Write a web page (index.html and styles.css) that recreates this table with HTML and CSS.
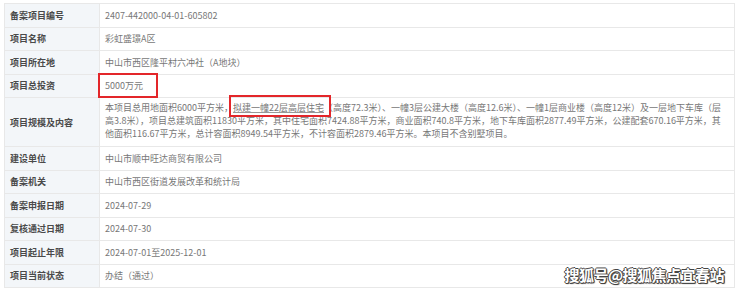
FILE: index.html
```html
<!DOCTYPE html>
<html lang="zh-CN">
<head>
<meta charset="utf-8">
<title>备案项目信息</title>
<link rel="stylesheet" href="styles.css">
</head>
<body>
<div class="page">
  <div class="info">
    <div class="row"><div class="label">备案项目编号</div><div class="value">2407-442000-04-01-605802</div></div>
    <div class="row"><div class="label">项目名称</div><div class="value">彩虹盛璟A区</div></div>
    <div class="row"><div class="label">项目所在地</div><div class="value">中山市西区隆平村六冲社（A地块）</div></div>
    <div class="row"><div class="label">项目总投资</div><div class="value">5000万元</div></div>
    <div class="row tall"><div class="label">项目规模及内容</div><div class="value">本项目总用地面积6000平方米，<span class="ul">拟建一幢22层高层住宅</span>（高度72.3米）、一幢3层公建大楼（高度12.6米）、一幢1层商业楼（高度12米）及一层地下车库（层高3.8米），项目总建筑面积11830平方米，其中住宅面积7424.88平方米，商业面积740.8平方米，地下车库面积2877.49平方米，公建配套670.16平方米，其他面积116.67平方米，总计容面积8949.54平方米，不计容面积2879.46平方米。本项目不含别墅项目。</div></div>
    <div class="row"><div class="label">建设单位</div><div class="value">中山市顺中旺达商贸有限公司</div></div>
    <div class="row"><div class="label">备案机关</div><div class="value">中山市西区街道发展改革和统计局</div></div>
    <div class="row"><div class="label">备案申报日期</div><div class="value">2024-07-29</div></div>
    <div class="row"><div class="label">复核通过日期</div><div class="value">2024-07-30</div></div>
    <div class="row"><div class="label">项目起止年限</div><div class="value">2024-07-01至2025-12-01</div></div>
    <div class="row"><div class="label">项目当前状态</div><div class="value">办结（通过）</div></div>
  </div>
  <div class="mark mark-invest"></div>
  <div class="mark mark-build"></div>
  <div class="watermark">搜狐号@搜狐焦点宜春站</div>
</div>
</body>
</html>
```

FILE: styles.css
```css
* { box-sizing: border-box; }
html, body { margin: 0; padding: 0; background: #fff; }
body {
  font-family: "Noto Sans CJK SC", "Noto Sans", sans-serif;
  width: 740px;
  height: 291px;
  overflow: hidden;
}
.page {
  position: relative;
  padding: 3px 5px 0 4px;
}
.info {
  border: 1px solid #e8e8e8;
  border-bottom: none;
}
.row {
  display: grid;
  grid-template-columns: 95px 1fr;
  min-height: 23.5px;
  border-bottom: 1px solid #e8e8e8;
}
.row.tall { min-height: 49px; }
.label {
  background: #f3f6f9;
  border-right: 1px solid #e8e8e8;
  display: flex;
  align-items: center;
  padding-left: 5px;
  font-size: 9px;
  font-weight: bold;
  color: #4a4a4a;
}
.value {
  display: flex;
  align-items: center;
  padding: 0 6px 0 5px;
  font-size: 9px;
  color: #777;
}
.tall .value {
  display: block;
  padding: 3px 6px 4px 5px;
  line-height: 13px;
}
.ul {
  text-decoration: underline;
  text-decoration-color: #999;
}
.mark {
  position: absolute;
  border: 2px solid #e3262a;
}
.mark-invest { left: 98px; top: 73px; width: 60px; height: 25px; }
.mark-build { left: 229px; top: 95px; width: 102px; height: 22px; }
.watermark {
  position: absolute;
  right: 16px;
  top: 264px;
  font-size: 15px;
  font-weight: bold;
  color: #fff;
  letter-spacing: -0.5px;
  text-shadow: 1px 0 0 #444, -1px 0 0 #444, 0 1px 0 #444, 0 -1px 0 #444, 1px 1px 1px #222;
}
```
